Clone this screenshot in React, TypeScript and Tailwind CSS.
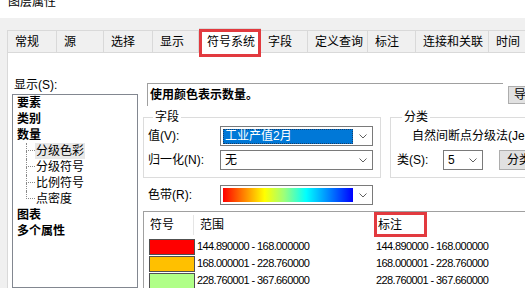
import React from "react";

const tabs = [
  { label: "常规", w: "w-[50px] border-l" },
  { label: "源", w: "w-[47px]" },
  { label: "选择", w: "w-[49px]" },
  { label: "显示", w: "w-[46px]" },
  { label: "符号系统", w: "w-[62px]", active: true },
  { label: "字段", w: "w-[47px]" },
  { label: "定义查询", w: "w-[60px]" },
  { label: "标注", w: "w-[48px]" },
  { label: "连接和关联", w: "w-[73px]" },
  { label: "时间", w: "w-[45px]" },
];

const children = ["分级色彩", "分级符号", "比例符号", "点密度"];

const rows = [
  { color: "bg-[#ff0000]", range: "144.890000 - 168.000000" },
  { color: "bg-[#ffc000]", range: "168.000001 - 228.760000" },
  { color: "bg-[#b0ff88]", range: "228.760001 - 367.660000" },
];

function Chevron() {
  return (
    <svg width="8" height="5" viewBox="0 0 8 5" className="shrink-0">
      <path d="M0.5 0.5 L4 4 L7.5 0.5" fill="none" stroke="#606060" strokeWidth="1" />
    </svg>
  );
}

function Combo({ className = "", children }: { className?: string; children?: React.ReactNode }) {
  return (
    <div className={`flex h-[20px] items-center border border-[#7a7a7a] bg-white pl-[2px] pr-[5px] ${className}`}>
      <div className="flex h-full min-w-0 flex-1 items-center">{children}</div>
      <Chevron />
    </div>
  );
}

export default function App() {
  return (
    <div className="h-[288px] w-[525px] overflow-hidden bg-[#f0f0f0] font-['Liberation_Sans','Noto_Sans_CJK_SC',sans-serif] text-[12px] text-black">
      {/* title bar */}
      <div className="h-[18px] overflow-hidden bg-white pl-[8px]">
        <div className="-mt-[4px] leading-[12px]">图层属性</div>
      </div>

      {/* tabs */}
      <div className="flex h-[34px] items-end pl-[7px]">
        {tabs.map((t) =>
          t.active ? (
            <div
              key={t.label}
              className={`relative z-10 -mb-px h-[25px] shrink-0 border-x border-t border-[#d9d9d9] bg-white pl-[7px] pt-[2px] leading-[22px] ${t.w}`}
            >
              {t.label}
              <span className="absolute -left-px top-0 h-[28px] w-[62px] border-[3px] border-[#e23a3f]" />
            </div>
          ) : (
            <div
              key={t.label}
              className={`h-[22px] shrink-0 border-r border-t border-[#d9d9d9] pl-[7px] leading-[22px] ${t.w}`}
            >
              {t.label}
            </div>
          )
        )}
      </div>

      {/* page */}
      <div className="ml-[7px] flex h-[236px] overflow-hidden border-l border-t border-[#d9d9d9] bg-white">
        {/* left column */}
        <div className="ml-[4px] flex w-[126px] shrink-0 flex-col">
          <div className="mt-[25px] h-[14px] pl-[2px] leading-[14px]">显示(S):</div>
          <div className="mt-[2px] h-[200px] border border-[#828790] pl-[4px]">
            <div className="font-bold leading-[16px]">要素</div>
            <div className="font-bold leading-[16px]">类别</div>
            <div className="font-bold leading-[16px]">数量</div>
            {children.map((c, i) => (
              <div key={c} className="flex h-[16px]">
                <div className="w-[9px] shrink-0" />
                <div className="flex w-[9px] shrink-0 flex-col">
                  <div className="h-[8px] border-b border-l border-dotted border-[#8a8a8a]" />
                  {i < children.length - 1 && <div className="h-[8px] border-l border-dotted border-[#8a8a8a]" />}
                </div>
                <div className={`px-[1px] leading-[16px] ${i === 0 ? "bg-[#e8e8e8]" : ""}`}>{c}</div>
              </div>
            ))}
            <div className="font-bold leading-[16px]">图表</div>
            <div className="font-bold leading-[16px]">多个属性</div>
          </div>
        </div>

        {/* right column */}
        <div className="ml-[5px] flex min-w-0 flex-1 flex-col pt-[30px]">
          <div className="flex h-[23px] shrink-0">
            <div className="ml-[4px] w-[356px] shrink-0 border-l border-t border-[#a0a0a0] pl-[2px] font-bold leading-[22px]">
              使用颜色表示数量。
            </div>
            <div className="ml-[5px] mt-[3px] h-[18px] w-[50px] shrink-0 border border-[#adadad] bg-[#e1e1e1] pl-[5px] leading-[16px]">
              导入...
            </div>
          </div>

          <div className="mt-[5px] flex shrink-0">
            <fieldset className="h-[67px] w-[238px] shrink-0 border border-[#dcdcdc] pl-[4px]">
              <legend className="ml-[5px] px-[2px] leading-[12px]">字段</legend>
              <div className="mt-[3px] flex h-[20px] items-center">
                <div className="w-[72px]">值(V):</div>
                <Combo className="w-[153px]">
                  <div className="h-[15px] w-[130px] border border-dotted border-[#1a3d66] bg-[#0078d7] pl-[1px] leading-[13px] text-white">
                    工业产值2月
                  </div>
                </Combo>
              </div>
              <div className="mt-[4px] flex h-[20px] items-center">
                <div className="w-[72px]">归一化(N):</div>
                <Combo className="w-[153px]">
                  <span className="pl-[2px]">无</span>
                </Combo>
              </div>
            </fieldset>

            <fieldset className="ml-[9px] h-[67px] w-[160px] shrink-0 border border-[#dcdcdc] pl-[6px]">
              <legend className="ml-[5px] px-[2px] leading-[12px]">分类</legend>
              <div className="mt-[3px] h-[20px] whitespace-nowrap pl-[15px] leading-[20px]">自然间断点分级法(Jenks)</div>
              <div className="mt-[4px] flex h-[20px] items-center">
                <div className="w-[46px]">类(S):</div>
                <Combo className="w-[40px]">
                  <span className="pl-[2px]">5</span>
                </Combo>
                <div className="ml-[16px] h-[20px] w-[60px] shrink-0 border border-[#adadad] bg-[#e1e1e1] pl-[7px] leading-[18px]">
                  分类...
                </div>
              </div>
            </fieldset>
          </div>

          <div className="mt-[7px] flex h-[20px] shrink-0 items-center pl-[5px]">
            <div className="w-[72px]">色带(R):</div>
            <Combo className="w-[153px]">
              <div className="h-[14px] w-[130px] bg-[linear-gradient(to_right,#ff0000_0%,#ff7a00_15%,#ffff00_32%,#9dff7a_47%,#00ffff_64%,#0090ff_80%,#0000ff_100%)]" />
            </Combo>
          </div>

          <div className="mt-[6px] flex-1 border-l border-t border-[#a0a0a0]">
            <div className="flex h-[26px] items-center">
              <div className="w-[49px] shrink-0 pl-[6px]">符号</div>
              <div className="h-[20px] w-px shrink-0 bg-[#e5e5e5]" />
              <div className="w-[179px] shrink-0 pl-[6px]">范围</div>
              <div className="relative flex h-full w-[60px] shrink-0 items-center pl-[5px]">
                标注
                <span className="absolute left-[1px] top-0 h-[25px] w-[53px] border-[3px] border-[#e23a3f]" />
              </div>
            </div>
            {rows.map((r) => (
              <div key={r.range} className="flex h-[17px] items-center text-[11px] tracking-[-0.6px]">
                <div className={`ml-[5px] h-[16px] w-[46px] shrink-0 border border-[#505050] ${r.color}`} />
                <div className="ml-[2px] w-[179px] shrink-0">{r.range}</div>
                <div className="shrink-0">{r.range}</div>
              </div>
            ))}
          </div>
        </div>
      </div>
    </div>
  );
}
